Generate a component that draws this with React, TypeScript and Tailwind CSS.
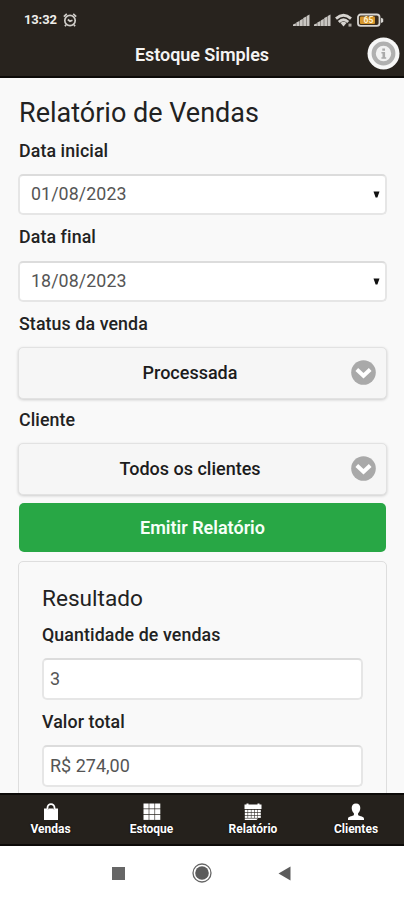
import type { ReactNode } from "react";

function Label({ children, className }: { children: ReactNode; className: string }) {
  return (
    <div className={`flex shrink-0 items-center whitespace-nowrap text-[17.8px] font-medium tracking-[0.1px] text-[#222] ${className}`}>
      {children}
    </div>
  );
}

function DateField({ value }: { value: string }) {
  return (
    <div className="flex h-[41px] shrink-0 items-center justify-between rounded-[5px] border-2 border-[#e6e6e6] border-t-[#dcdcdc] bg-white pr-[5px] pl-[11px]">
      <span className="pb-0.5 text-[17.8px] leading-5 tracking-[0.1px] text-[#555]">{value}</span>
      <svg width="7" height="7" viewBox="0 0 7 7">
        <path d="M0.5 0.5h6L4.4 6.5H2.6z" fill="#111" />
      </svg>
    </div>
  );
}

function TextField({ value }: { value: string }) {
  return (
    <div className="flex h-[42px] shrink-0 items-center rounded-[5px] border-2 border-[#e6e6e6] border-t-[#dcdcdc] bg-white pl-[6px]">
      <span className="pb-0.5 text-[18px] text-[#555]">{value}</span>
    </div>
  );
}

function SelectButton({ value }: { value: string }) {
  return (
    <div className="flex h-[52px] shrink-0 items-center rounded-[5px] border border-[#e2e2e2] bg-[#f6f6f6] px-[10px] pb-px shadow-[0_1px_3px_rgba(0,0,0,0.18)]">
      <span className="flex-1 text-center text-[18px] font-medium text-[#1c1c1c]">{value}</span>
      <svg width="25" height="25" viewBox="0 0 25 25">
        <circle cx="12.5" cy="12.5" r="12.3" fill="#a9a9a9" />
        <path d="M5.8 9.5l6.7 6.2 6.7-6.2" fill="none" stroke="#fff" strokeWidth="4" />
      </svg>
    </div>
  );
}

function StatusIcons() {
  return (
    <svg width="92" height="14" viewBox="0 0 92 14">
      {[0, 21].map((x) => (
        <g key={x} transform={`translate(${x} 0)`} fill="#c9c6c2">
          <path d="M0 13V11.5L2.9 10.3V13zM3.3 13V9.5L6.4 8.1V13zM6.8 13V7.5L9.8 5.800V13zM10.2 13V5L13.300 3.6V13zM13.7 13V3L16.500 1.5V13z" />
        </g>
      ))}
      <g fill="none" stroke="#d6d3cf" strokeWidth="2.8">
        <path d="M43 5.6Q50.5-1 58 5.6" />
        <path d="M45.8 9Q50.5 4.600 55.2 9" />
      </g>
      <path d="M47.5 10Q50.5 7.5 53.5 10L50.5 13.6z" fill="#d6d3cf" />
      <path d="M55.5 10.6h3v3h-3z" fill="#aaa6a0" />
      <rect x="65" y="1.5" width="21.5" height="11.300" rx="2.6" fill="#3a2c1c" stroke="#d9d7d4" strokeWidth="1.8" />
      <path d="M88 4.8l2.2 1v3.2L88 10z" fill="#d9d7d4" />
      <rect x="67" y="3.4" width="15" height="7.6" rx="1" fill="#d6962c" />
      <text x="75.5" y="10.4" textAnchor="middle" fontFamily="Roboto, sans-serif" fontSize="8.5" fontWeight="700" fill="#fff2cf">65</text>
    </svg>
  );
}

function BagIcon() {
  return (
    <svg width="18" height="18" viewBox="0 0 18 18">
      <path d="M2 5.5h3l1 1 1-1h4l1 1 1-1h3V17H2z" fill="#fff" />
      <path d="M5.5 6V4.7a3.5 3.5 0 0 1 7 0V6" fill="none" stroke="#fff" strokeWidth="1.8" />
    </svg>
  );
}

function GridIcon() {
  return (
    <svg width="18" height="18" viewBox="0 0 18 18" fill="#fff">
      {[0.5, 6.2, 11.9].map((y) =>
        [0.5, 6.3, 12.1].map((x) => <rect key={`${x}-${y}`} x={x} y={y} width="5.2" height="5" />)
      )}
    </svg>
  );
}

function CalendarIcon() {
  return (
    <svg width="18" height="18" viewBox="0 0 18 18" fill="#fff">
      <path d="M0.5 1.5h2V0.5h2v1h9v-1h2v1h2V6h-17z" />
      {[6.8, 9.7, 12.6].map((y) =>
        [0.8, 4.1, 7.4, 10.7, 14].map((x) => <rect key={`${x}-${y}`} x={x} y={y} width="2.8" height="2.3" />)
      )}
      <path d="M0.8 15.4h13.2l-1.5 1.6H0.8z" />
    </svg>
  );
}

function PersonIcon() {
  return (
    <svg width="18" height="18" viewBox="0 0 18 18" fill="#fff">
      <path d="M9 0.5c2.9 0 4.3 2 4.3 4.6 0 2.2-.9 4-2.2 5.2v2c2.2 1 5.9 1.2 5.9 3.5V17H1v-1.2c0-2.3 3.7-2.5 5.9-3.5v-2C5.6 9.1 4.7 7.3 4.7 5.1 4.7 2.5 6.1 0.5 9 0.5z" />
    </svg>
  );
}

const tabs = [
  { name: "Vendas", icon: <BagIcon /> },
  { name: "Estoque", icon: <GridIcon /> },
  { name: "Relatório", icon: <CalendarIcon /> },
  { name: "Clientes", icon: <PersonIcon /> },
];

export default function App() {
  return (
    <div className="flex h-[900px] w-[404px] flex-col overflow-hidden bg-white font-[Roboto,'Liberation_Sans',sans-serif]">
      <header className="h-[78px] shrink-0 border-b-2 border-[#0c0a08] bg-[#28231e]">
        <div className="flex h-10 items-center pl-6 pr-[19px]">
          <span className="text-[13px] font-bold tracking-[-0.15px] text-[#efedeb]">13:32</span>
          <svg className="ml-[6px]" width="14" height="14" viewBox="0 0 14 14" fill="none" stroke="#cfccc8" strokeWidth="1.7">
            <circle cx="7" cy="7.5" r="5.2" />
            <path d="M0.8 3.6L3.8 0.9M13.2 3.6L10.2 0.9M4.8 6.5L7 8.2L9.5 7.2M3 11.8L2 13.3M11 11.8L12 13.3" />
          </svg>
          <div className="ml-auto"><StatusIcons /></div>
        </div>
        <div className="flex h-[28px] items-center pl-[37px] pr-[4px]">
          <h1 className="flex-1 text-center text-[18px] font-semibold tracking-[-0.05px] text-[#f5f4f3]">Estoque Simples</h1>
          <svg className="-mt-[2px]" width="33" height="33" viewBox="0 0 33 33">
            <circle cx="16.5" cy="16.5" r="16" fill="#f7f7f7" />
            <circle cx="16.5" cy="16.5" r="9.8" fill="#f2f2f2" stroke="#b0b0b0" strokeWidth="4.2" />
            <path d="M15.300 11.5h2.700v2.300H15.300zM14.400 15h3.700v5.200h1.100v1.500H14.400V20.2h1.100v-3.700H14.400z" fill="#aaa" />
          </svg>
        </div>
      </header>

      <main className="flex h-[715px] shrink-0 flex-col overflow-hidden bg-[#f9f9f9] pr-[17px] pl-[18px] pt-[19px]">
        <h2 className="flex h-8 shrink-0 items-center whitespace-nowrap pl-px text-[27px] text-[#222]">Relatório de Vendas</h2>
        <Label className="h-[45px] pl-px">Data inicial</Label>
        <DateField value="01/08/2023" />
        <Label className="h-[46px] pb-px pl-px">Data final</Label>
        <DateField value="18/08/2023" />
        <Label className="h-[45px] pl-px">Status da venda</Label>
        <SelectButton value="Processada" />
        <Label className="h-[44px] pb-px pl-px">Cliente</Label>
        <SelectButton value="Todos os clientes" />
        <div className="mx-px mt-2 flex h-[49px] shrink-0 items-center justify-center rounded-[5px] bg-[#28a745] text-[18px] font-semibold text-[#f6fff8]">
          Emitir Relatório
        </div>
        <section className="mt-[9px] flex h-[300px] shrink-0 flex-col rounded-[5px] border border-[#dedede] px-[23px] pt-[20px]">
          <h3 className="flex h-8 shrink-0 items-center pt-0.5 text-[22.6px] text-[#222]">Resultado</h3>
          <Label className="h-[44px] pb-0.5">Quantidade de vendas</Label>
          <TextField value="3" />
          <Label className="h-[45px] pb-px">Valor total</Label>
          <TextField value="R$ 274,00" />
        </section>
      </main>

      <nav className="grid h-[53px] shrink-0 grid-cols-[101px_101px_102px_104px] border-y-2 border-[#0c0a08] bg-[#25211c]">
        {tabs.map((tab) => (
          <div key={tab.name} className="flex flex-col items-center pt-2">
            {tab.icon}
            <span className="mt-px text-[12px] leading-[14px] font-bold text-white [text-shadow:0_0_2px_#000]">{tab.name}</span>
          </div>
        ))}
      </nav>

      <div className="flex h-[54px] items-center bg-white pl-[112px]">
        <div className="h-[13px] w-[13px] bg-[#666]" />
        <svg className="ml-[67px]" width="20" height="20" viewBox="0 0 20 20">
          <circle cx="10" cy="10" r="9" fill="none" stroke="#666" strokeWidth="1.3" />
          <circle cx="10" cy="10" r="6.8" fill="#5c5c5c" />
        </svg>
        <svg className="ml-[66px]" width="13" height="15" viewBox="0 0 13 15">
          <path d="M0.5 7.5L12.5 0.5v14z" fill="#5c5c5c" />
        </svg>
      </div>
    </div>
  );
}
